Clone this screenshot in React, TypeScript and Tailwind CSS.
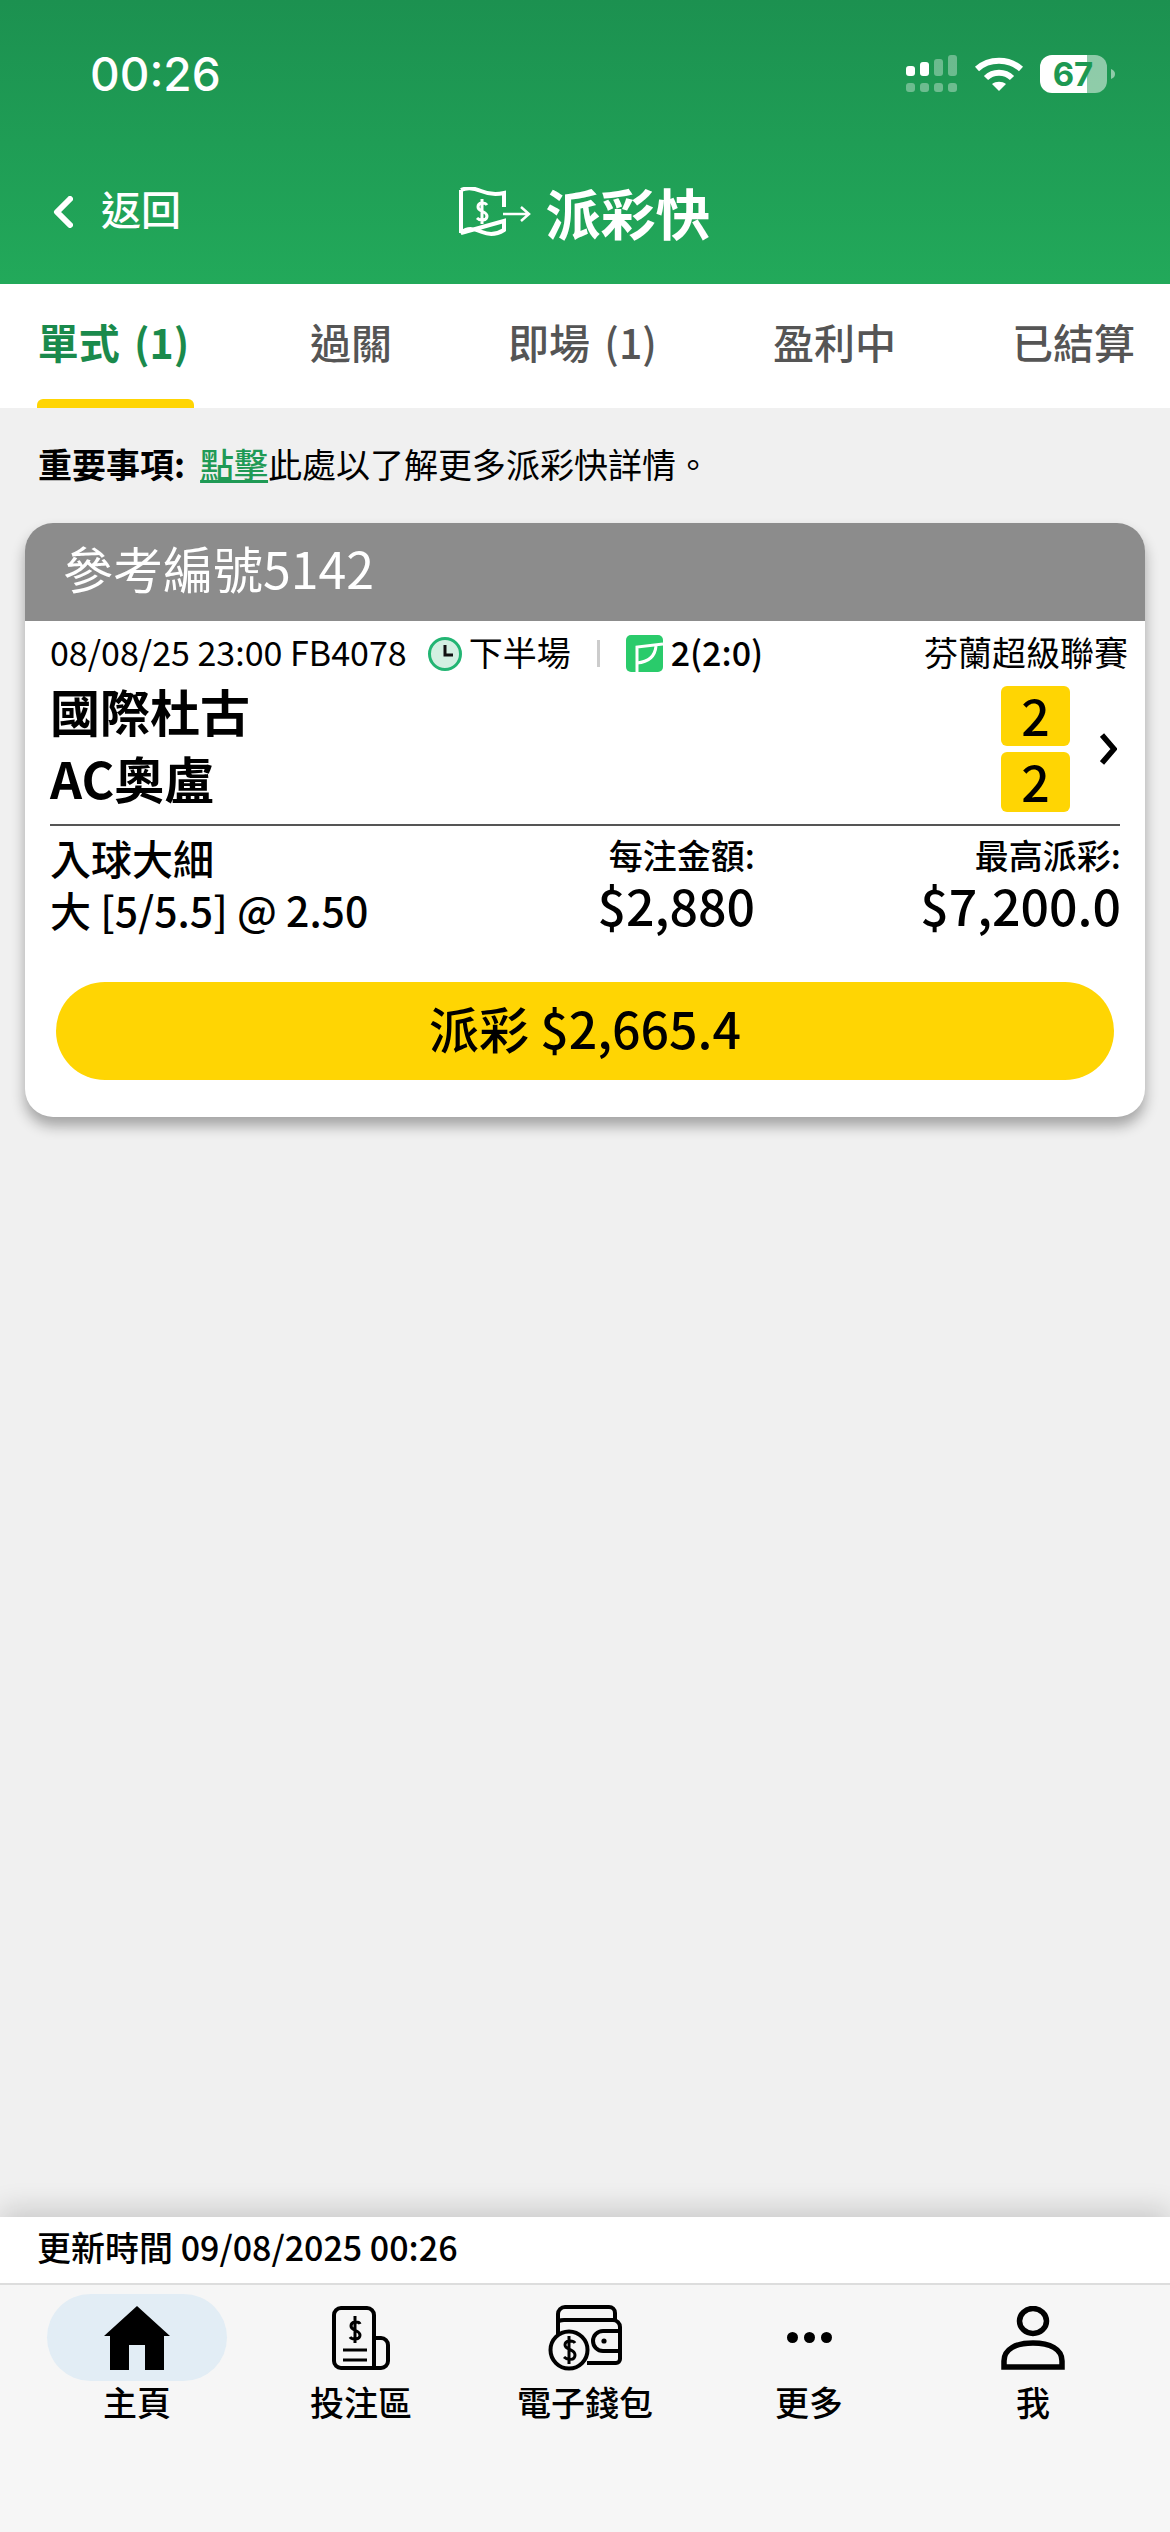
const cjk = { fontFamily: '"Noto Sans CJK TC", "Noto Sans", sans-serif' }

function StatusIcons() {
  return (
    <div className="flex items-center">
      <svg width="52" height="38" viewBox="0 0 52 38" fill="#fff">
        <rect x="0" y="11" width="9" height="10" rx="3" />
        <rect x="14" y="7" width="9" height="14" rx="3" />
        <rect x="28" y="4" width="9" height="17" rx="3" opacity="0.35" />
        <rect x="42" y="0" width="9" height="21" rx="3" opacity="0.35" />
        <g opacity="0.35">
          <rect x="0" y="28" width="9" height="9" rx="3" />
          <rect x="14" y="28" width="9" height="9" rx="3" />
          <rect x="28" y="28" width="9" height="9" rx="3" />
          <rect x="42" y="28" width="9" height="9" rx="3" />
        </g>
      </svg>
      <svg className="ml-[16px]" width="50" height="36" viewBox="0 0 50 36" fill="none" stroke="#fff" strokeWidth="6">
        <path d="M3 13C15 2 35 2 47 13" />
        <path d="M12 22C19 15 31 15 38 22" />
        <path d="M25 35l-7-7c4-3 10-3 14 0z" fill="#fff" stroke="none" />
      </svg>
      <svg className="ml-[16px]" width="76" height="38" viewBox="0 0 76 38" style={{ fontFamily: 'Inter, sans-serif' }}>
        <path d="M12 0h35v38H12A12 12 0 0 1 0 26V12A12 12 0 0 1 12 0z" fill="#fff" />
        <path d="M47 0h8a12 12 0 0 1 12 12v14a12 12 0 0 1-12 12h-8z" fill="#fff" opacity="0.5" />
        <path d="M71 14c3 1 4 3 4 5s-1 4-4 5z" fill="#fff" opacity="0.5" />
        <text x="33" y="31" textAnchor="middle" fontSize="33" fontWeight="700" fill="#1d9852">67</text>
      </svg>
    </div>
  )
}

function MoneyIcon() {
  return (
    <svg width="72" height="50" viewBox="0 0 72 50" fill="none" stroke="#fff" strokeWidth="4">
      <path d="M2 3c7-3 13-2 20 1s14 4 23 2v14M45 34v9c-8 5-15 5-22 2S9 40 2 46z" />
      <path d="M2 3v43" />
      <path d="M44 27h25M62 20l8 7-8 7" strokeWidth="2.5" />
      <path d="M28 18c-2-3-9-3-9 2s9 4 9 9-7 5-10 2M23 12v25" strokeWidth="3" />
    </svg>
  )
}

function ClockIcon() {
  return (
    <svg width="36" height="36" viewBox="0 0 36 36" fill="none">
      <circle cx="18" cy="18" r="15.5" fill="#d3f0e2" stroke="#22b573" strokeWidth="3" />
      <path d="M18 9v10h8" stroke="#111" strokeWidth="3" />
    </svg>
  )
}

function PitchIcon() {
  return (
    <svg width="37" height="37" viewBox="0 0 37 37">
      <rect width="37" height="37" rx="5" fill="#2acb6b" />
      <path d="M11 37V12L37 9" fill="none" stroke="#fff" strokeWidth="3" />
      <path d="M30 11C29 22 22 27 11 28" fill="none" stroke="#fff" strokeWidth="3" />
    </svg>
  )
}

function HomeIcon() {
  return (
    <svg width="66" height="64" viewBox="0 0 66 64">
      <path d="M33 0l33 30h-6v34H41V39H25v25H6V30H0z" fill="#000" />
    </svg>
  )
}

function BetSlipIcon() {
  return (
    <svg width="58" height="64" viewBox="0 0 58 64" fill="none" stroke="#000" strokeWidth="4">
      <path d="M9 2h26a7 7 0 0 1 7 7v53H9a7 7 0 0 1-7-7V9a7 7 0 0 1 7-7z" />
      <path d="M42 32h7a7 7 0 0 1 7 7v16a7 7 0 0 1-7 7h-7" />
      <path d="M28 18c-1-3-9-3-9 2s9 4 9 9-8 5-10 2M23 10v27" strokeWidth="3" />
      <path d="M11 44h24M11 54h24" strokeWidth="3" />
    </svg>
  )
}

function WalletIcon() {
  return (
    <svg width="74" height="66" viewBox="0 0 74 66" fill="none" stroke="#000" strokeWidth="4">
      <path d="M10 30V9a7 7 0 0 1 7-7h44a6 6 0 0 1 6 6v8" />
      <path d="M10 18c0-2 3-3 6-3h49a7 7 0 0 1 7 7v32a4 4 0 0 1-4 4H39" />
      <path d="M72 26H55a10 10 0 0 0 0 20h17" />
      <circle cx="56" cy="36" r="2.6" fill="#000" stroke="none" />
      <circle cx="21" cy="45" r="18.5" fill="#f6f6f6" />
      <path d="M27 38c-2-3-10-3-10 2s10 4 10 10-8 5-11 2M21 31v28" strokeWidth="3" />
    </svg>
  )
}

function UserIcon() {
  return (
    <svg width="64" height="64" viewBox="0 0 64 64" fill="none" stroke="#000" strokeWidth="5.5">
      <ellipse cx="32" cy="15" rx="13.5" ry="12.5" />
      <path d="M3 61v-6c0-12 12-18 29-18s29 6 29 18v6z" />
    </svg>
  )
}

const tabs = [
  { label: '單式 (1)', active: true },
  { label: '過關' },
  { label: '即場 (1)' },
  { label: '盈利中' },
  { label: '已結算' },
]

const navItems = [
  { label: '主頁', icon: <HomeIcon />, active: true },
  { label: '投注區', icon: <BetSlipIcon /> },
  { label: '電子錢包', icon: <WalletIcon /> },
  {
    label: '更多',
    icon: (
      <div className="flex h-[64px] items-center gap-[6px]">
        <span className="size-[11px] rounded-full bg-black" />
        <span className="size-[11px] rounded-full bg-black" />
        <span className="size-[11px] rounded-full bg-black" />
      </div>
    ),
  },
  { label: '我', icon: <UserIcon /> },
]

export default function App() {
  return (
    <div className="flex h-[2532px] w-[1170px] flex-col overflow-hidden bg-[#f0f0f0] text-black" style={cjk}>
      {/* Green header */}
      <header className="h-[284px] shrink-0 bg-gradient-to-b from-[#1c9150] to-[#22a95a] text-white">
        <div className="flex items-center justify-between pl-[90px] pr-[54px] pt-[46px]">
          <span className="text-[46px] font-medium leading-[56px]" style={{ fontFamily: 'Inter, sans-serif' }}>00:26</span>
          <StatusIcons />
        </div>
        <div className="mt-[77px] grid grid-cols-[1fr_auto_1fr] items-center">
          <div className="flex items-center gap-[28px] pl-[53px]">
            <svg width="20" height="32" viewBox="0 0 20 32" fill="none" stroke="#fff" strokeWidth="6" strokeLinecap="round" strokeLinejoin="round">
              <path d="M17 3L4 16l13 13" />
            </svg>
            <span className="pb-[8px] text-[40px] font-medium leading-[50px]">返回</span>
          </div>
          <div className="flex items-center gap-[14px]">
            <MoneyIcon />
            <span className="pb-[2px] text-[55px] font-bold leading-[64px]">派彩快</span>
          </div>
          <div />
        </div>
      </header>

      {/* Tabs */}
      <nav className="flex h-[124px] shrink-0 justify-between bg-white pl-[37px] pr-[35px]">
        {tabs.map((tab) => (
          <div key={tab.label} className="flex flex-col items-center justify-between">
            <span className={`pt-[32px] text-[41px] leading-[50px] [word-spacing:5px] ${tab.active ? 'pr-[4px] font-bold text-[#1a8a4c]' : 'font-medium text-[#555]'}`}>
              {tab.label}
            </span>
            {tab.active && <span className="h-[9px] w-[157px] rounded-t-[6px] bg-[#ffd503]" />}
          </div>
        ))}
      </nav>

      {/* Notice */}
      <p className="pl-[38px] pt-[34px] text-[34px] leading-[44px]">
        <span className="font-bold">重要事項:</span>
        <span className="ml-[15px] font-medium text-[#1f9a55] underline">點擊</span>
        此處以了解更多派彩快詳情。
      </p>

      {/* Bet card */}
      <section className="mx-[25px] mt-[37px] h-[594px] overflow-hidden rounded-[28px] bg-white shadow-[0_9px_14px_rgba(0,0,0,0.32)]">
        <div className="flex h-[98px] items-center bg-[#8c8c8c] pb-[11px] pl-[38px] text-[50px] leading-[60px] text-white">參考編號5142</div>
        <div className="px-[25px]">
          <div className="flex h-[62px] items-center text-[34px] leading-[44px]">
            <span>08/08/25 23:00 FB4078</span>
            <span className="ml-[20px] pt-[3px]"><ClockIcon /></span>
            <span className="ml-[6px]">下半場</span>
            <span className="ml-[26px] mt-[3px] h-[27px] w-[3px] bg-[#ccc]" />
            <span className="ml-[26px] pt-[3px]"><PitchIcon /></span>
            <span className="ml-[8px] font-medium">2(2:0)</span>
            <span className="ml-auto -mr-[8px]">芬蘭超級聯賽</span>
          </div>
          <div className="mt-[3px] flex items-center">
            <div className="flex flex-1 flex-col gap-[6px]">
              <div className="flex items-center justify-between">
                <span className="pb-[11px] text-[50px] font-bold leading-[49px]">國際杜古</span>
                <span className="flex h-[60px] w-[69px] items-center justify-center rounded-[6px] bg-[#ffd503] pb-[4px] text-[50px] font-medium">2</span>
              </div>
              <div className="flex items-center justify-between">
                <span className="pb-[10px] text-[50px] font-bold leading-[50px]">AC奧盧</span>
                <span className="flex h-[60px] w-[69px] items-center justify-center rounded-[6px] bg-[#ffd503] pb-[4px] text-[50px] font-medium">2</span>
              </div>
            </div>
            <svg className="ml-[30px] mr-[3px]" width="17" height="32" viewBox="0 0 17 32" fill="none" stroke="#000" strokeWidth="5.5">
              <path d="M2 2l12 14L2 30" />
            </svg>
          </div>
          <div className="mt-[12px] h-[2px] w-[1070px] bg-[#555]" />
          <div className="flex h-[126px] w-[1071px] pt-[6px]">
            <div className="flex-1">
              <div className="text-[41px] font-medium leading-[50px]">入球大細</div>
              <div className="mt-[2px] text-[41px] font-medium leading-[50px]">大 [5/5.5] @ 2.50</div>
            </div>
            <div className="w-[240px] text-right">
              <div className="text-[34px] font-medium leading-[46px]">每注金額:</div>
              <div className="text-[50px] font-medium leading-[52px]">$2,880</div>
            </div>
            <div className="w-[366px] text-right">
              <div className="text-[34px] font-medium leading-[46px]">最高派彩:</div>
              <div className="text-[50px] font-medium leading-[52px]">$7,200.0</div>
            </div>
          </div>
          <button className="mt-[30px] ml-[6px] flex h-[98px] w-[1058px] items-center justify-center rounded-[49px] bg-[#ffd503] pb-[8px] text-[50px] font-medium">
            派彩 $2,665.4
          </button>
        </div>
      </section>

      {/* Footer */}
      <div className="mt-auto flex h-[66px] shrink-0 items-center bg-white pb-[6px] pl-[37px] text-[34px] font-medium leading-[44px] shadow-[0_-8px_28px_rgba(0,0,0,0.16)]">
        更新時間 09/08/2025 00:26
      </div>
      <nav className="grid h-[249px] shrink-0 grid-cols-5 content-start border-t-2 border-[#ddd] bg-[#f6f6f6] px-[25px] pt-[9px]">
        {navItems.map((item) => (
          <div key={item.label} className="flex flex-col items-center">
            <div className={`flex h-[87px] w-[180px] items-center justify-center rounded-[44px] ${item.active ? 'bg-[#e2edf5]' : ''}`}>
              {item.icon}
            </div>
            <span className="text-[34px] font-medium leading-[42px]">{item.label}</span>
          </div>
        ))}
      </nav>
    </div>
  )
}
